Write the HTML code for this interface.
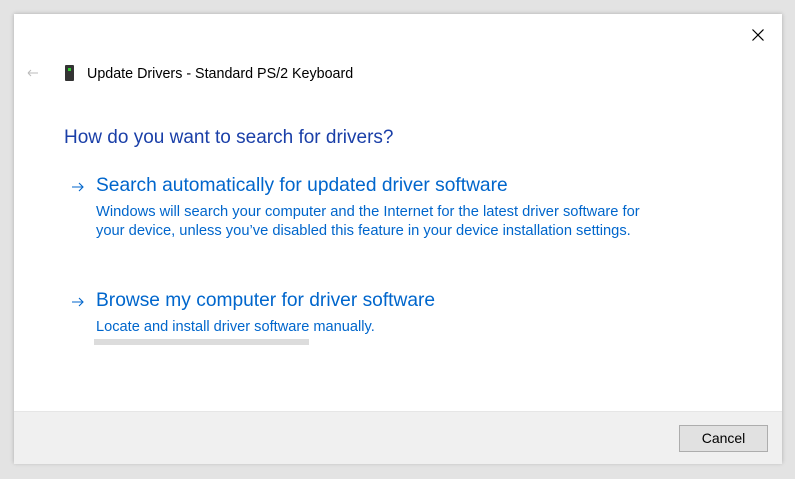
<!DOCTYPE html>
<html><head><style>
body{margin:0;width:795px;height:479px;background:#e3e3e3;font-family:"Liberation Sans",sans-serif;position:relative;overflow:hidden}
.win{position:absolute;left:14px;top:14px;width:768px;height:449px;background:#fff;box-shadow:0 0 4px rgba(0,0,0,.25)}
.foot{position:absolute;left:0;top:397px;width:768px;height:52px;background:#f0f0f0;border-top:1px solid #e6e6e6}
.t{position:absolute;white-space:nowrap}
.btn{position:absolute;left:665px;top:13px;width:87px;height:25px;background:#e1e1e1;border:1px solid #adadad;font-size:14px;color:#000;text-align:center;line-height:25px}
</style></head><body>
<div class="win">
<svg class="t" style="left:738px;top:15px" width="12" height="12"><path d="M0.5 0.5L11.5 11.5M11.5 0.5L0.5 11.5" stroke="#000" stroke-width="1.2"/></svg>
<svg class="t" style="left:13px;top:55px" width="11" height="8"><path d="M1 4H11M1 4L4 1M1 4L4 7" stroke="#bbb" fill="none"/></svg>
<div class="t" style="left:51px;top:51px;width:9px;height:16px;background:#333;border-radius:1px"></div>
<div class="t" style="left:54px;top:54px;width:3px;height:3px;background:#3c3"></div>
<div class="t" style="left:73px;top:52px;font-size:14.3px;color:#000">Update Drivers - Standard PS/2 Keyboard</div>
<div class="t" style="left:50px;top:113px;font-size:19px;color:#1a3fa8">How do you want to search for drivers?</div>
<svg class="t" style="left:58px;top:168px" width="12" height="10"><path d="M0 5H11M7 1L11 5L7 9" stroke="#0066cc" fill="none" stroke-width="1.1"/></svg>
<div class="t" style="left:82px;top:161px;font-size:19.2px;color:#0066cc">Search automatically for updated driver software</div>
<div class="t" style="left:82px;top:189px;font-size:14.7px;color:#0066cc;line-height:19px">Windows will search your computer and the Internet for the latest driver software for<br>your device, unless you’ve disabled this feature in your device installation settings.</div>
<svg class="t" style="left:58px;top:283px" width="12" height="10"><path d="M0 5H11M7 1L11 5L7 9" stroke="#0066cc" fill="none" stroke-width="1.1"/></svg>
<div class="t" style="left:82px;top:276px;font-size:19.2px;color:#0066cc">Browse my computer for driver software</div>
<div class="t" style="left:82px;top:305px;font-size:14.6px;color:#0066cc">Locate and install driver software manually.</div>
<div class="t" style="left:80px;top:325px;width:215px;height:6px;background:#dcdcdc"></div>
<div class="foot"><div class="btn">Cancel</div></div>
</div>
</body></html>
